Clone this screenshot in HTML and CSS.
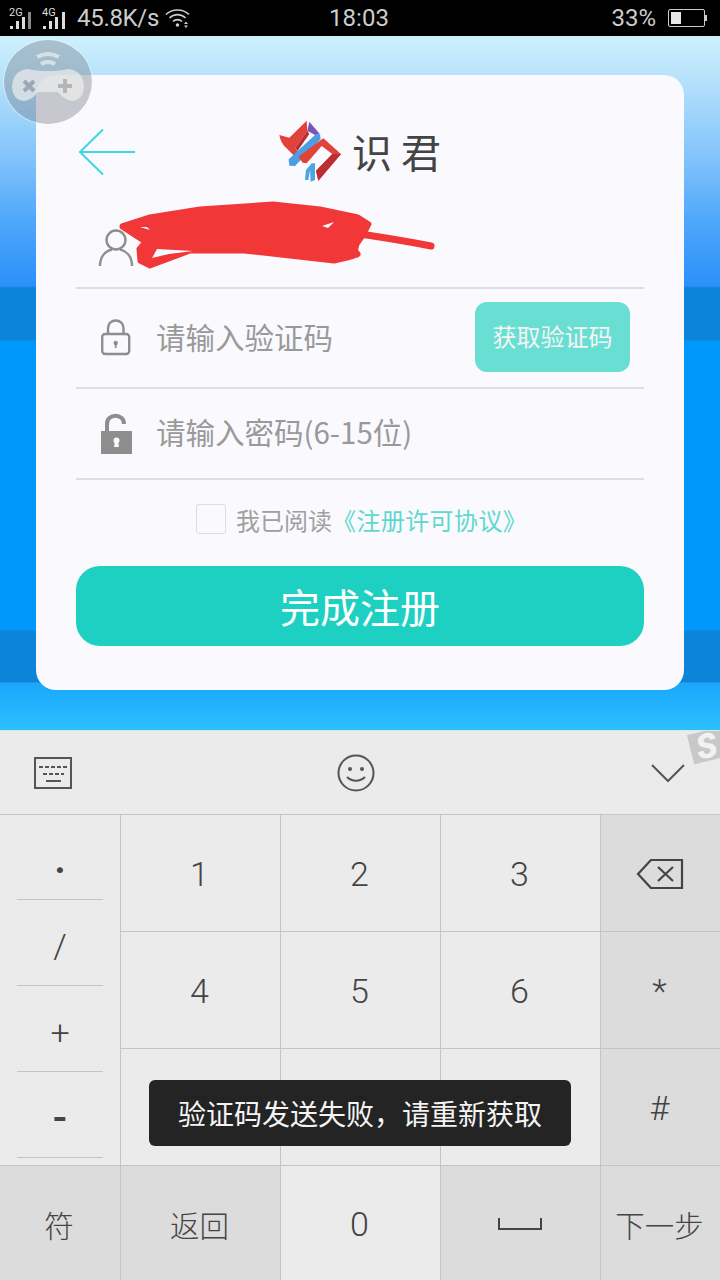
FILE: index.html

```html
<!DOCTYPE html>
<html lang="zh-CN">
<head>
    <meta charset="UTF-8">
    <meta name="viewport" content="width=device-width, initial-scale=1.0">
    <title>识君 - 完成注册</title>
    <link rel="stylesheet" href="styles.css">
</head>
<body>
    <!-- status bar -->
    <div class="status-bar">
        <div class="status-left">
            <svg class="signal" width="30" height="24" viewBox="0 0 30 24">
                <text x="0" y="10" class="signal-label">2G</text>
                <path d="M1 20h3v3H1zM7 15h3v8H7zM13 11h3v12h-3z" fill="#ddd"/>
                <path d="M19 6h3v17h-3z" fill="#888"/>
            </svg>
            <svg class="signal" width="30" height="24" viewBox="0 0 30 24">
                <text x="0" y="10" class="signal-label">4G</text>
                <path d="M1 20h3v3H1zM7 15h3v8H7zM13 11h3v12h-3zM20 6h3v17h-3z" fill="#ddd"/>
            </svg>
            <span class="net-speed">45.8K/s</span>
            <svg class="wifi" width="25" height="20" viewBox="0 0 25 20" fill="none" stroke="#ccc" stroke-width="1.6">
                <path d="M1 6.500C7 .5 18 .5 24 6.500M4.500 10C9 5.500 16 5.500 20.500 10M8 13.500c2.500-2.500 6.500-2.500 9 0"/>
                <circle cx="12.500" cy="17" r="1.800" fill="#ccc" stroke="none"/>
                <path d="M19 16l2-2.500 2 2.500zM19 17.500l2 2.500 2-2.500z" fill="#ccc" stroke="none"/>
            </svg>
        </div>
        <div class="status-time">18:03</div>
        <div class="status-right">
            <span>33%</span>
            <div class="battery"><div class="battery-level"></div></div>
            <div class="battery-tip"></div>
        </div>
    </div>

    <!-- register form -->
    <div class="screen">
        <div class="card">
            <div class="card-head">
                <svg class="back-arrow" width="58" height="48" viewBox="0 0 58 48" fill="none" stroke="#3fd6e4" stroke-width="2">
                    <path d="M25 1.500L2 24l23 22.500M2 24h55"/>
                </svg>
                <div class="logo">
                    <svg width="64" height="62" viewBox="835 360 190 186">
                        <path d="M838 405l30 8 52-51 2 30-37 53 15 17-12 11-28-28q-18-15-22-40z" fill="#e2423c"/>
                        <path d="M885 445l37-53 6 10-35 50z" fill="#b92f33"/>
                        <path d="M928 365l32 38-15 2-23-13z" fill="#7a55b5"/>
                        <path d="M945 405l15-2 2 15-77 80-17-1-2-19z" fill="#4a9fe3"/>
                        <path d="M895 470l75-55 53 47-68 80-7-30 49-50-32-24-45 52-12-2z" fill="#e0433a"/>
                        <path d="M955 542l-7-30 49-50 26 0z" fill="#b92f33"/>
                        <path d="M915 540l3-30 17-20 10 0 0 50-13 5-2-35-5 30z" fill="#4aa6dc"/>
                    </svg>
                    <span class="logo-name">识 君</span>
                </div>
            </div>

            <div class="field field-user">
                <svg class="field-icon" width="36" height="40" viewBox="0 0 36 40" fill="none" stroke="#8e8e8e" stroke-width="2.400">
                    <circle cx="18" cy="12" r="9.500"/>
                    <path d="M2 38c0-10 6-15 12-16.500M34 38c0-10-6-15-12-16.500"/>
                </svg>
                <svg class="scribble" width="340" height="80" viewBox="110 195 340 80">
                    <path fill="#f13737" stroke="#f13737" stroke-width="5" stroke-linejoin="round" d="M122 226l28-9 50-8 73-5 47 5 38 8 11 7-5 10-7 10-3 12-7 2-13 3-44-5-46-5-54 0-40 15-10-5-1-12 6-7-23-15z"/>
                    <path fill="none" stroke="#f13737" stroke-width="7" stroke-linecap="round" d="M345 232q45 6 86 14M335 240q16 6 22 14"/>
                    <path fill="#f9f9fe" d="M152 258l5-9 36 2-24 3zM322 226l12-4-6 6zM140 227l10 3-3-3z"/>
                </svg>
            </div>

            <div class="field">
                <svg class="field-icon" width="36" height="40" viewBox="0 0 36 40" fill="none" stroke="#8e8e8e" stroke-width="2.400">
                    <rect x="4.200" y="16" width="27" height="20" rx="3"/>
                    <path d="M10 16v-6c0-10 15.500-10 15.500 0v6"/>
                    <circle cx="17.700" cy="25" r="2.200" fill="#8e8e8e" stroke="none"/>
                    <path d="M17.700 25v5" stroke-width="1.800"/>
                </svg>
                <span class="placeholder">请输入验证码</span>
                <div class="code-btn">获取验证码</div>
            </div>

            <div class="field field-last">
                <svg class="field-icon" width="36" height="42" viewBox="0 0 36 42">
                    <path d="M9 19v-8c0-11 17-11 17 0" fill="none" stroke="#8e8e8e" stroke-width="4"/>
                    <rect x="3" y="18" width="31" height="23" fill="#8e8e8e"/>
                    <circle cx="18.500" cy="27.500" r="3" fill="#f9f9fe"/>
                    <path d="M17 28h3l1 6h-5z" fill="#f9f9fe"/>
                </svg>
                <span class="placeholder">请输入密码(6-15位)</span>
            </div>

            <div class="agreement">
                <span class="checkbox"></span>
                <span>我已阅读</span><span class="agreement-link">《注册许可协议》</span>
            </div>

            <div class="submit-btn">完成注册</div>
        </div>
    </div>

    <!-- input method keyboard -->
    <div class="keyboard">
        <div class="kb-toolbar">
            <svg width="38" height="32" viewBox="0 0 38 32" fill="none" stroke="#555" stroke-width="2">
                <rect x="1" y="1" width="36" height="30"/>
                <path d="M5 10h29M9 17h21" stroke-dasharray="4 2"/>
                <path d="M12 24h15"/>
            </svg>
            <svg class="kb-emoji" width="38" height="38" viewBox="0 0 38 38" fill="none" stroke="#555" stroke-width="2">
                <circle cx="19" cy="19" r="17.500"/>
                <circle cx="13" cy="15" r="2" fill="#555" stroke="none"/>
                <circle cx="25" cy="15" r="2" fill="#555" stroke="none"/>
                <path d="M10 23c5 5 13 5 18 0"/>
            </svg>
            <svg width="34" height="20" viewBox="0 0 34 20" fill="none" stroke="#555" stroke-width="2">
                <path d="M1 2l16 16L33 2"/>
            </svg>
            <div class="sogou-mark">S</div>
        </div>
        <div class="kb-grid">
            <div class="kb-symbols">
                <div class="kb-symbol kb-dot">·</div>
                <div class="kb-symbol">/</div>
                <div class="kb-symbol">+</div>
                <div class="kb-symbol kb-minus">-</div>
            </div>
            <div class="key">1</div>
            <div class="key">2</div>
            <div class="key">3</div>
            <div class="key key-dark">
                <svg width="48" height="30" viewBox="0 0 48 30" fill="none" stroke="#444" stroke-width="2.200">
                    <path d="M15 1h31v28H15L2 15z"/>
                    <path d="M22 8l15 14M37 8L22 22"/>
                </svg>
            </div>
            <div class="key">4</div>
            <div class="key">5</div>
            <div class="key">6</div>
            <div class="key key-dark">*</div>
            <div class="key">7</div>
            <div class="key">8</div>
            <div class="key">9</div>
            <div class="key key-dark">#</div>
            <div class="key key-dark key-text">符</div>
            <div class="key key-dark key-text">返回</div>
            <div class="key">0</div>
            <div class="key key-dark">
                <svg width="44" height="12" viewBox="0 0 44 12" fill="none" stroke="#444" stroke-width="2">
                    <path d="M1 0v11h42V0"/>
                </svg>
            </div>
            <div class="key key-dark key-text">下一步</div>
        </div>
    </div>

    <!-- things floating over the page -->
    <div class="game-btn">
        <svg width="88" height="84" viewBox="0 0 88 84">
            <path d="M24 29q8 2 20 2t20-2q15 1 16 18-1 13-12 14-8-1-14-9H34q-6 8-14 9-11-1-12-14 1-17 16-18z" fill="#eee" fill-opacity=".7"/>
            <path d="M20 41l10 10M30 41L20 51" stroke="#9aa9b5" stroke-width="4"/>
            <path d="M61 39v14M54 46h14" stroke="#b5b5b5" stroke-width="4"/>
            <path d="M33 17q11-6 22 0M37 24q7-4 14 0" stroke="#eee" stroke-opacity=".7" stroke-width="4" fill="none"/>
        </svg>
    </div>
    <div class="toast">验证码发送失败，请重新获取</div>
</body>
</html>
```

FILE: styles.css

```css
* {
    box-sizing: border-box;
}

body {
    margin: 0;
    width: 720px;
    height: 1280px;
    position: relative;
    overflow: hidden;
    font-family: Roboto, "Noto Sans CJK SC", sans-serif;
    background-color: #ebebeb;
}

/* status bar */
.status-bar {
    height: 36px;
    background-color: #000;
    color: #ccc;
    font-size: 24px;
    display: flex;
    align-items: center;
    padding: 0 13px 0 9px;
}

.status-left {
    flex: 1;
    display: flex;
    align-items: center;
    gap: 3px;
}

.signal-label {
    font-size: 11px;
    fill: #ddd;
    font-family: Roboto, sans-serif;
}

.net-speed {
    margin-left: 2px;
    letter-spacing: -0.3px;
}

.wifi {
    margin-left: 3px;
}

.status-time {
    width: 62px;
    margin-left: 2px;
    text-align: center;
}

.status-right {
    flex: 1;
    display: flex;
    align-items: center;
    justify-content: flex-end;
}

.battery {
    width: 37px;
    height: 18px;
    margin-left: 12px;
    border: 1px solid #ccc;
    border-radius: 2px;
    padding: 2px;
}

.battery-level {
    width: 10px;
    height: 100%;
    background-color: #e8e8e8;
}

.battery-tip {
    width: 2px;
    height: 6px;
    background-color: #ccc;
}

/* blue background with the card */
.screen {
    height: 694px;
    padding: 39px 36px 0;
    background: linear-gradient(to bottom,
        #cdf0fd 0,
        #b9e3fb 40px,
        #7cc0fb 130px,
        #52a9fb 180px,
        #2c90fb 250px,
        #0b84d9 252px,
        #0b84d9 304px,
        #0099fb 305px,
        #0099fb 594px,
        #0b84d9 595px,
        #0b84d9 646px,
        #1aa6fb 647px,
        #2cc0fe 694px);
}

.card {
    height: 615px;
    background-color: #f9f9fe;
    border-radius: 20px;
    padding: 0 40px;
}

.card-head {
    height: 108px;
    display: flex;
    align-items: center;
    position: relative;
}

.back-arrow {
    margin: 46px 0 0 2px;
}

.logo {
    display: flex;
    align-items: center;
    margin: 44px 0 0 142px;
}

.logo-name {
    font-family: "Noto Sans CJK SC", sans-serif;
    font-size: 40px;
    line-height: 48px;
    color: #444;
    margin-left: 10px;
    white-space: nowrap;
}

.field {
    height: 100px;
    display: flex;
    align-items: center;
    padding-left: 22px;
    border-bottom: 2px solid #dedede;
    position: relative;
}

.field-user {
    height: 106px;
    padding-top: 26px;
}

.field-last {
    height: 91px;
}

.field-icon {
    flex: none;
}

.scribble {
    position: absolute;
    left: 34px;
    top: 12px;
}

.placeholder {
    margin: 0 0 5px 22px;
    font-family: "Noto Sans CJK SC", sans-serif;
    font-size: 29.5px;
    color: #999;
}

.code-btn {
    margin: 0 14px 2px auto;
    padding-bottom: 3px;
    width: 155px;
    height: 70px;
    border-radius: 12px;
    background-color: #69dfd3;
    color: #f4f4f4;
    font-size: 24px;
    display: flex;
    align-items: center;
    justify-content: center;
}

.agreement {
    height: 86px;
    display: flex;
    align-items: center;
    padding: 0 0 8px 120px;
    font-size: 24px;
    color: #a0a0a0;
}

.checkbox {
    width: 30px;
    height: 30px;
    margin-right: 10px;
    border: 1px solid #ddd;
    border-radius: 3px;
}

.agreement-link {
    color: #5fd8cf;
    letter-spacing: 0.4px;
}

.submit-btn {
    height: 80px;
    border-radius: 24px;
    background-color: #1dd0c2;
    color: #fff;
    font-size: 40px;
    display: flex;
    align-items: center;
    justify-content: center;
}

/* keyboard */
.keyboard {
    height: 550px;
    background-color: #c4c4c4;
    border-top: 1px solid #cfeaf6;
}

.kb-toolbar {
    height: 83px;
    background-color: #ebebeb;
    display: flex;
    align-items: center;
    justify-content: space-between;
    padding: 0 35px 0 34px;
    position: relative;
    overflow: hidden;
}

.kb-emoji {
    margin-right: 12px;
}

.sogou-mark {
    position: absolute;
    right: -10px;
    top: -1px;
    width: 40px;
    height: 30px;
    background-color: #c8c8c8;
    transform: rotate(-14deg);
    color: #f2f2f2;
    font-size: 34px;
    font-weight: 900;
    font-style: italic;
    line-height: 30px;
    padding-left: 6px;
}

.kb-grid {
    display: grid;
    grid-template-columns: 120px 159px 159px 159px 119px;
    grid-template-rows: 116px 116px 116px 114px;
    gap: 1px;
    padding-top: 1px;
    font-weight: 300;
    font-size: 34px;
    color: #444;
}

.kb-symbols {
    grid-row: span 3;
    background-color: #ebebeb;
    padding: 0 17px 7px;
    display: flex;
    flex-direction: column;
}

.kb-symbol {
    height: 86px;
    flex: none;
    border-bottom: 1px solid #c4c4c4;
    display: flex;
    align-items: center;
    justify-content: center;
    padding-top: 6px;
}

.kb-dot {
    height: 85px;
    padding-top: 26px;
    font-weight: 700;
    font-size: 38px;
}

.kb-minus {
    font-weight: 500;
    font-size: 42px;
}

.key {
    background-color: #ebebeb;
    display: flex;
    align-items: center;
    justify-content: center;
    padding: 2px 2px 0 0;
}

.key-dark {
    background-color: #dcdcdc;
}

.key-text {
    font-size: 29.5px;
}

/* overlays */
.game-btn {
    position: absolute;
    left: 4px;
    top: 40px;
    width: 88px;
    height: 84px;
    border-radius: 50%;
    background-color: rgba(105, 110, 120, 0.35);
    box-shadow: 0 0 0 1px rgba(255, 255, 255, 0.4);
}

.toast {
    position: absolute;
    left: 149px;
    top: 1080px;
    width: 422px;
    height: 66px;
    border-radius: 6px;
    background-color: rgba(32, 32, 32, 0.98);
    color: #f4f4f4;
    font-size: 28px;
    display: flex;
    align-items: center;
    justify-content: center;
}
```
